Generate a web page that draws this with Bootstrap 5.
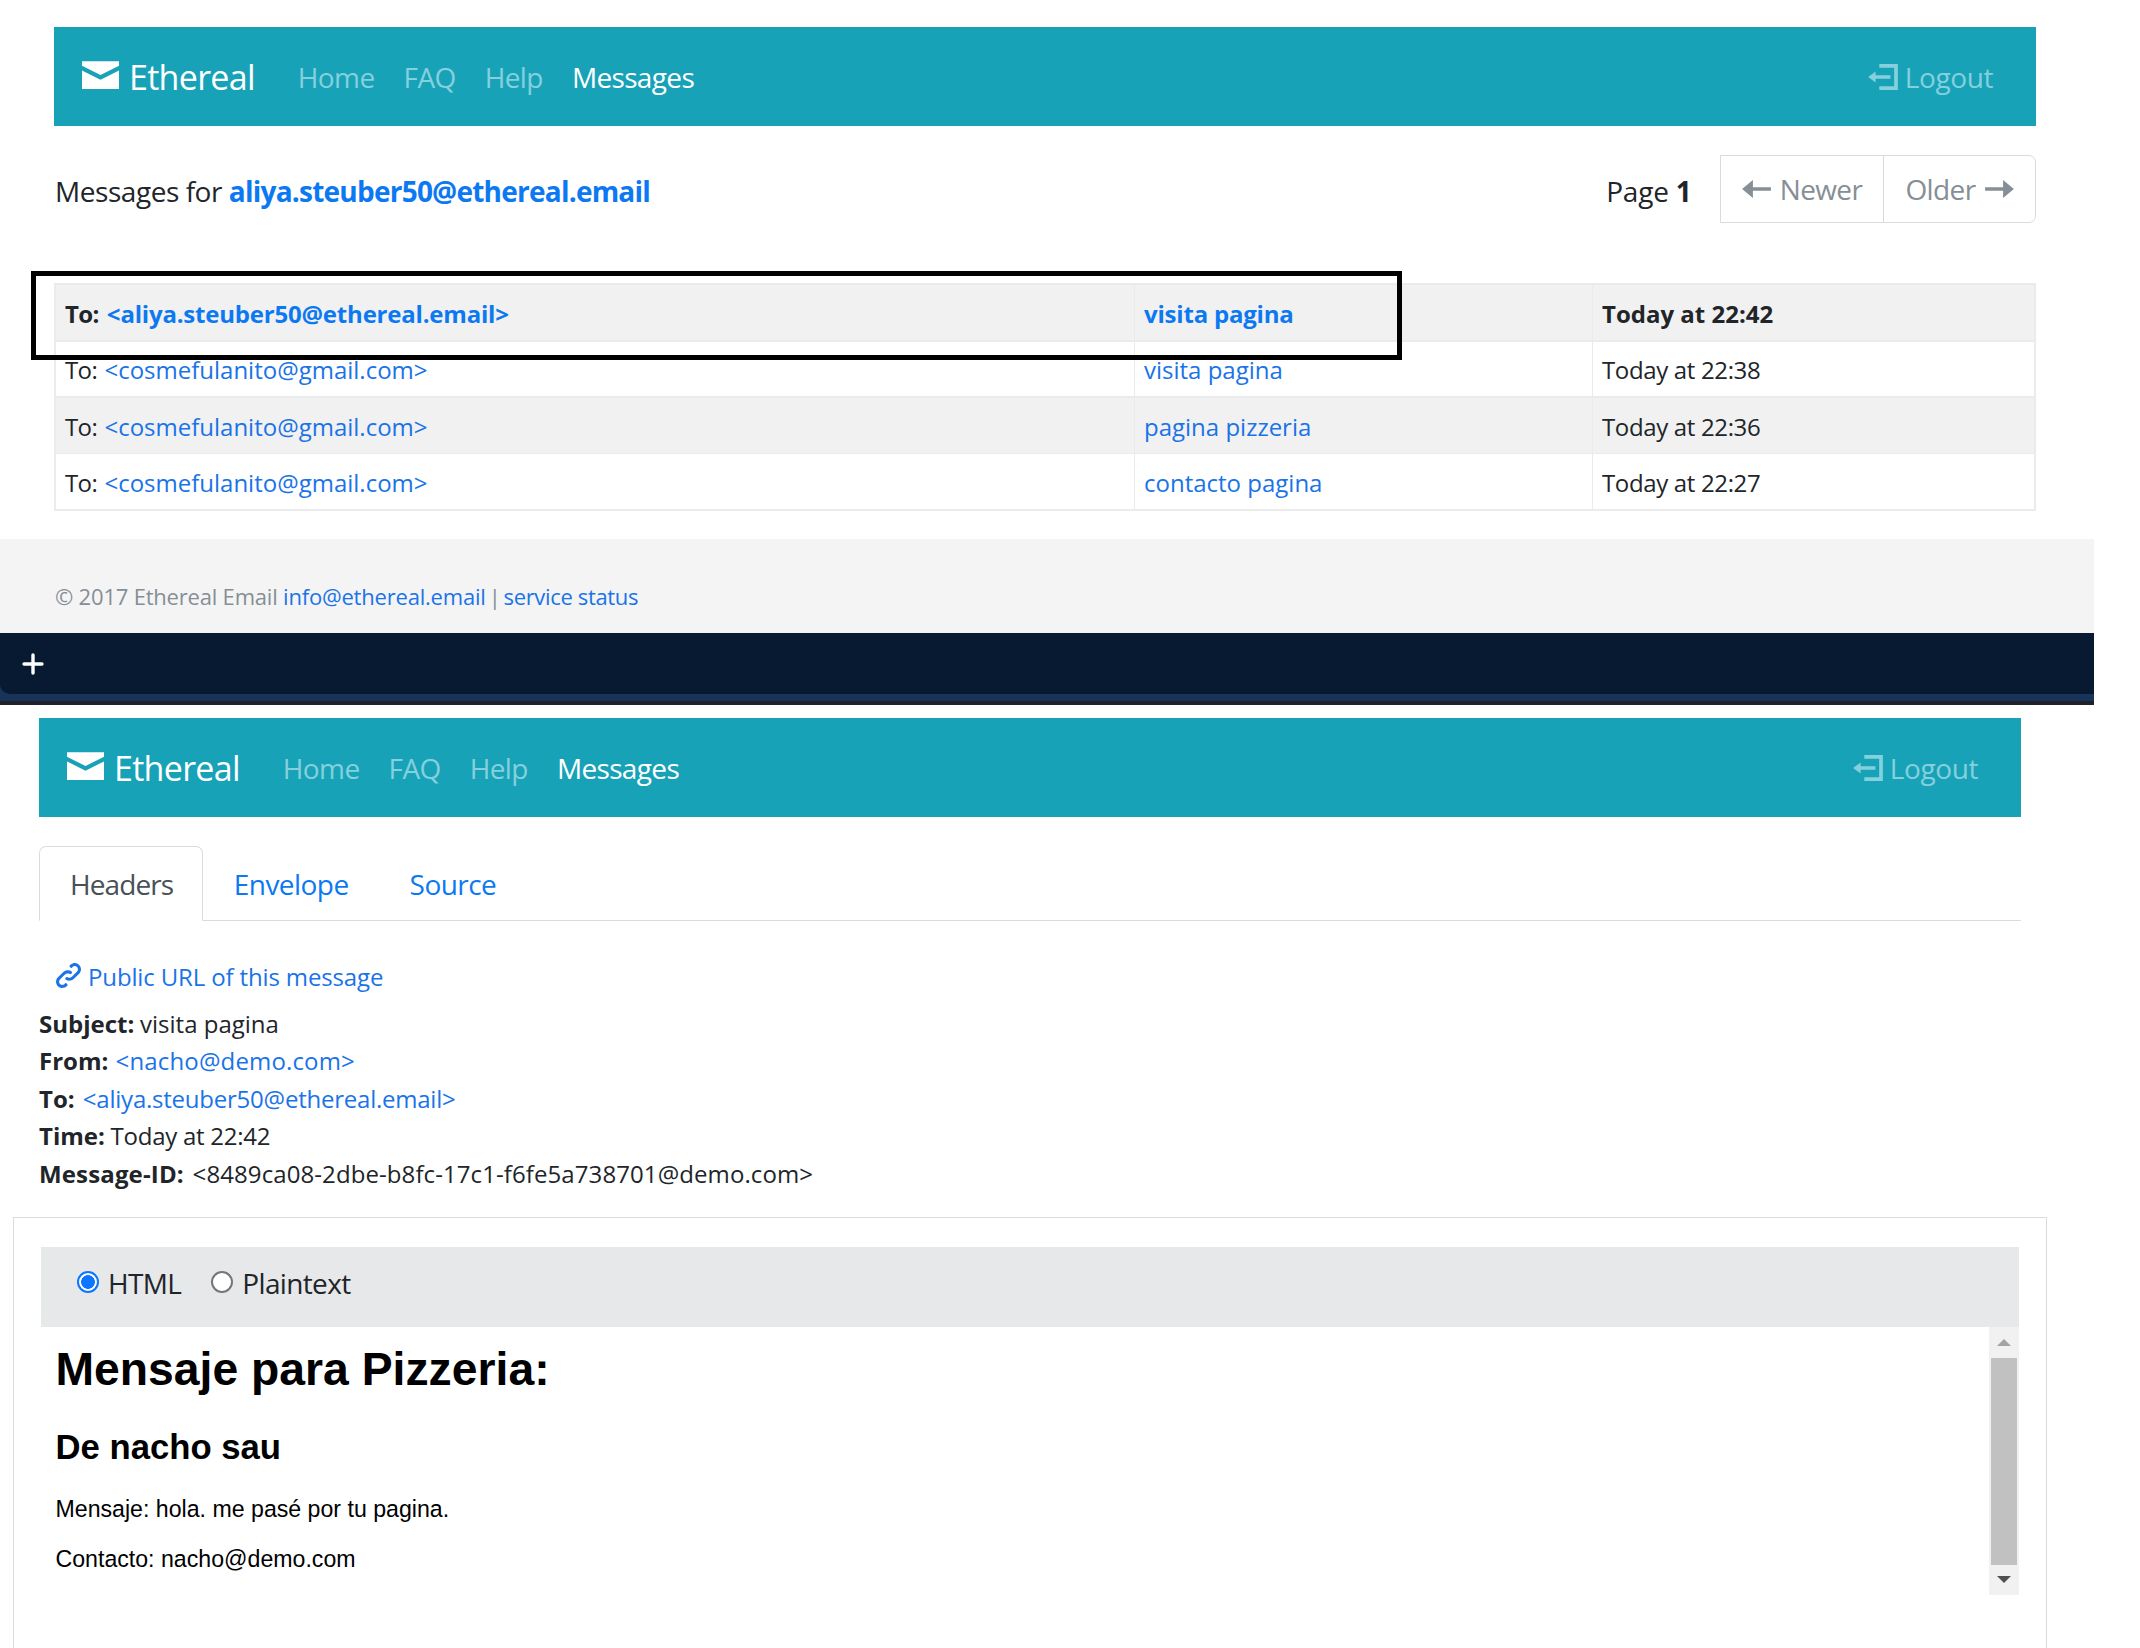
<!DOCTYPE html>
<html lang="en">
<head>
<meta charset="utf-8">
<title>Ethereal Email</title>
<link href="https://cdn.jsdelivr.net/npm/bootstrap@5.3.0/dist/css/bootstrap.min.css" rel="stylesheet">
<style>
  body { font-family: "Open Sans", "Noto Sans", sans-serif; font-size: 28px; color: #212529; background: #fff; height: 1648px; overflow: hidden; }
  a { color: #1a73e8; text-decoration: none; }
  strong a, .mail-table .fw-bold a { color: #0c79f2; }
  strong { font-weight: 700; }
  svg { fill: currentColor; flex: none; display: block; }
  .screen { width: 2094px; }

  .top-nav { height: 99px; background: #18a2b8; padding: 0 43px 0 28px; line-height: 42px; letter-spacing: -.6px; }
  .top-nav a { color: #84d0dc; }
  .top-nav .brand-link { color: #fff; font-size: 34px; letter-spacing: -.7px; gap: 10px; margin-right: 43px; }
  .top-nav .brand-link svg { margin-bottom: 3px; }
  .top-nav .brand-link span { padding-top: 1px; }
  .top-nav .nav-list { gap: 29px; }
  .top-nav .current { color: #fff; letter-spacing: -.65px; }
  .top-nav .logout-link { gap: 7px; letter-spacing: -.4px; }
  .inbox { padding: 27px 58px 0 54px; height: 539px; }
  .list-head { margin-top: 29px; height: 68px; line-height: 42px; }
  .list-head > div { padding: 3px 0 0 1px; letter-spacing: -.45px; }
  .list-head strong { letter-spacing: -.77px; }
  .list-head .page-no { margin-right: 29px; letter-spacing: -.2px; }
  .pager { width: 316px; border: 1px solid #d9dcdf; border-radius: 0 7px 7px 0; color: #868e96; letter-spacing: -.6px; }
  .pager > span { gap: 9px; }
  .pager > span:first-child { width: 163px; border-right: 1px solid #d9dcdf; }

  .mail-table { margin: 60px 0 0; width: 1982px; table-layout: fixed; border-collapse: separate; border-spacing: 0; font-size: 24px; line-height: 36px; color: #212529; }
  .mail-table td { box-sizing: border-box; padding: 2px 0 0 9px; vertical-align: middle; border: 0 solid #e9ebed; border-width: 2px 0 0 1px; background: #fff; box-shadow: none; height: 57px; }
  .mail-table tr:nth-child(odd) td { background: #f1f1f1; }
  .mail-table tr:nth-child(2) td { height: 56px; padding-top: 1px; }
  .mail-table tr:last-child td { height: 58px; border-top-width: 1px; border-bottom-width: 2px; padding-top: 3px; }
  .mail-table td:first-child { border-left-width: 2px; }
  .mail-table td:first-child span { letter-spacing: -.6px; margin-right: 1px; }
  .mail-table .fw-bold td:first-child span { margin-right: 2px; }
  .mail-table td:last-child { border-right-width: 2px; letter-spacing: -.35px; }
  .mail-table .fw-bold td { letter-spacing: -.2px; }
  .mail-table .fw-bold td:last-child { letter-spacing: 0; }
  .marker { position: absolute; left: 31px; top: 271px; width: 1371px; height: 89px; border: 5px solid #000; }

  .site-foot { height: 94px; background: #f4f4f4; color: #868e96; font-size: 22px; letter-spacing: -.2px; padding: 17px 0 0 55px; line-height: 80px; }
  .site-foot i { margin: 0 -2.5px; font-style: normal; }
  .site-foot .status-link { letter-spacing: -.35px; }
  .tab-strip { height: 68px; background: #19335a; }
  .tab-strip div { height: 61px; background: #081a31; border-bottom-left-radius: 10px; padding: 20px 0 0 22px; color: #fff; }
  .dark-line { height: 4px; background: #1f2229; }

  .message { padding: 13px 73px 0 39px; }
  .msg-tabs { margin-top: 29px; height: 75px; border-bottom: 1px solid #d9dcdf; line-height: 42px; letter-spacing: -.55px; flex-wrap: nowrap; }
  .msg-tabs .nav-link { height: 75px; padding: 16px 29.5px 0; border-radius: 7px 7px 0 0; color: #0c79f2; margin-bottom: -1px; }
  .msg-tabs .nav-link.active { color: #495057; border-color: #d9dcdf #d9dcdf #fff; letter-spacing: -.9px; padding-left: 30px; padding-right: 29px; }
  .public-link { font-size: 24px; line-height: 36px; margin: 38px 0 0 17px; gap: 7px; letter-spacing: -.14px; }
  .public-link svg { margin-bottom: 4px; }
  .head-list { font-size: 24px; line-height: 37.5px; margin-top: 9.5px; }
  .head-list .val { margin-left: -.5px; }
  .head-list .from-val { margin-left: 1px; letter-spacing: .15px; }
  .head-list .to-val { margin-left: 2px; letter-spacing: -.23px; }
  .head-list .time-val { letter-spacing: -.25px; }
  .head-list .id-key { letter-spacing: .15px; }
  .head-list .id-val { margin-left: 2.5px; letter-spacing: .09px; }

  .msg-card { width: 2034px; height: 440px; margin: 25px 0 0 13px; border: 1px solid #d9dcdf; border-bottom: 0; padding: 29px 27px 0; }
  .view-bar { height: 80px; background: #e6e8ea; line-height: 42px; letter-spacing: -.65px; padding: 15px 0 0 36px; }
  .view-bar label { gap: 9px; }
  .view-bar label + label { margin-left: 6px; }
  .view-bar input { appearance: none; width: 22px; height: 22px; margin: 0 0 2px; border: 2px solid #767676; border-radius: 50%; background: #fff; }
  .view-bar input:checked { border-color: #0d75ff; background: radial-gradient(circle, #0d75ff 6.5px, #fff 7.2px); }
  .mail-frame { height: 268px; font-family: "Liberation Sans", Arial, sans-serif; color: #000; font-size: 23.15px; }
  .mail-frame .frame-text { padding: 12px 0 0 14.5px; }
  .mail-frame h1 { font-size: 46.3px; line-height: 60px; font-weight: 700; margin: 0; }
  .mail-frame h2 { font-size: 34.7px; line-height: 44px; font-weight: 700; margin: 26px 0 0; }
  .mail-frame p { line-height: 30px; margin: 25px 0 0; }
  .mail-frame p + p { margin-top: 20px; }
  .scroll-rail { width: 30px; background: #f1f1f1; padding: 12px 2px; }
  .scroll-rail div { height: 207px; background: #c1c1c1; align-self: stretch; }
  .scroll-rail svg { color: #a3a3a3; }
  .scroll-rail div + svg { color: #505050; }
</style>
</head>
<body>
<svg class="d-none">
  <symbol id="i-mail" viewBox="0 1 8 6"><path d="M0 1v1l4 2 4-2v-1h-8zm0 2v4h8v-4l-4 2-4-2z"/></symbol>
  <symbol id="i-logout" viewBox="0 0 8 7"><path d="M3 0v1h4v5h-4v1h5v-7h-5zm-1 2l-2 1.5 2 1.5v-1h4v-1h-4v-1z"/></symbol>
  <symbol id="i-left" viewBox="0 1 8 5"><path d="M3 1l-3 2.5 3 2.5v-2h5v-1h-5v-2z"/></symbol>
  <symbol id="i-right" viewBox="0 1 8 5"><path d="M5 1v2h-5v1h5v2l3-2.5-3-2.5z"/></symbol>
  <symbol id="i-link" viewBox="0 0 8 8"><path d="M5.88.03c-.18.01-.36.03-.53.09-.27.1-.53.25-.75.47a.5.5 0 1 0 .69.69c.11-.11.24-.17.38-.22.35-.12.78-.07 1.06.22.39.39.39 1.04 0 1.44l-1.5 1.5c-.44.44-.8.48-1.06.47-.26-.01-.41-.13-.41-.13a.5.5 0 1 0-.5.88s.34.22.84.25c.5.03 1.2-.16 1.81-.78l1.5-1.5c.78-.78.78-2.04 0-2.81-.28-.28-.61-.45-.97-.53-.18-.04-.38-.04-.56-.03zm-2 2.31c-.5-.02-1.19.15-1.78.75l-1.5 1.5c-.78.78-.78 2.04 0 2.81.56.56 1.36.72 2.06.47.27-.1.53-.25.75-.47a.5.5 0 1 0-.69-.69c-.11.11-.24.17-.38.22-.35.12-.78.07-1.06-.22-.39-.39-.39-1.04 0-1.44l1.5-1.5c.4-.4.75-.45 1.03-.44.28.01.47.09.47.09a.5.5 0 1 0 .44-.88s-.34-.2-.84-.22z"/></symbol>
</svg>
<div class="screen position-relative">
  <section class="inbox">
    <nav class="top-nav d-flex align-items-center">
      <a href="#" class="brand-link d-flex align-items-center"><svg width="37" height="28"><use href="#i-mail"/></svg><span>Ethereal</span></a>
      <div class="nav-list d-flex"><a href="#">Home</a><a href="#">FAQ</a><a href="#">Help</a><a href="#" class="current">Messages</a></div>
      <a href="#" class="logout-link d-flex align-items-center ms-auto"><svg width="30" height="26"><use href="#i-logout"/></svg><span>Logout</span></a>
    </nav>
    <div class="list-head d-flex align-items-center">
      <div>Messages for <strong><a href="#">aliya.steuber50@ethereal.email</a></strong></div>
      <div class="page-no ms-auto">Page <strong>1</strong></div>
      <nav class="pager d-flex align-self-stretch p-0">
        <span class="d-flex align-items-center justify-content-center"><svg width="29" height="18"><use href="#i-left"/></svg><span>Newer</span></span>
        <span class="d-flex align-items-center justify-content-center flex-grow-1"><span>Older</span><svg width="29" height="18"><use href="#i-right"/></svg></span>
      </nav>
    </div>
    <table class="table mail-table">
      <colgroup><col style="width:1080px"><col style="width:458px"><col></colgroup>
      <tbody>
        <tr class="fw-bold"><td><span>To:</span> <a href="#">&lt;aliya.steuber50@ethereal.email&gt;</a></td><td><a href="#">visita pagina</a></td><td>Today at 22:42</td></tr>
        <tr><td><span>To:</span> <a href="#">&lt;cosmefulanito@gmail.com&gt;</a></td><td><a href="#">visita pagina</a></td><td>Today at 22:38</td></tr>
        <tr><td><span>To:</span> <a href="#">&lt;cosmefulanito@gmail.com&gt;</a></td><td><a href="#">pagina pizzeria</a></td><td>Today at 22:36</td></tr>
        <tr><td><span>To:</span> <a href="#">&lt;cosmefulanito@gmail.com&gt;</a></td><td><a href="#">contacto pagina</a></td><td>Today at 22:27</td></tr>
      </tbody>
    </table>
    <div class="marker"></div>
  </section>
  <footer class="site-foot">© 2017 Ethereal Email <a href="#">info@ethereal.email</a> <i>|</i> <a href="#" class="status-link">service status</a></footer>
  <div class="tab-strip"><div><svg width="22" height="22" viewBox="0 0 22 22"><path d="M11 2v18M2 11h18" stroke="#fff" stroke-width="3.4" stroke-linecap="round"/></svg></div></div>
  <div class="dark-line"></div>

  <section class="message">
    <nav class="top-nav d-flex align-items-center">
      <a href="#" class="brand-link d-flex align-items-center"><svg width="37" height="28"><use href="#i-mail"/></svg><span>Ethereal</span></a>
      <div class="nav-list d-flex"><a href="#">Home</a><a href="#">FAQ</a><a href="#">Help</a><a href="#" class="current">Messages</a></div>
      <a href="#" class="logout-link d-flex align-items-center ms-auto"><svg width="30" height="26"><use href="#i-logout"/></svg><span>Logout</span></a>
    </nav>
    <div class="nav nav-tabs msg-tabs">
      <a class="nav-link active" href="#">Headers</a><a class="nav-link" href="#">Envelope</a><a class="nav-link" href="#">Source</a>
    </div>
    <a href="#" class="public-link d-flex align-items-center"><svg width="25" height="25"><use href="#i-link"/></svg><span>Public URL of this message</span></a>
    <div class="head-list">
      <div><strong>Subject:</strong> <span class="val">visita pagina</span></div>
      <div><strong>From:</strong> <a href="#" class="from-val">&lt;nacho@demo.com&gt;</a></div>
      <div><strong>To:</strong> <a href="#" class="to-val">&lt;aliya.steuber50@ethereal.email&gt;</a></div>
      <div><strong>Time:</strong> <span class="val time-val">Today at 22:42</span></div>
      <div><strong class="id-key">Message-ID:</strong> <span class="id-val">&lt;8489ca08-2dbe-b8fc-17c1-f6fe5a738701@demo.com&gt;</span></div>
    </div>
  </section>
  <section class="msg-card">
    <div class="view-bar d-flex align-items-start">
      <label class="d-flex align-items-center me-4"><input type="radio" name="view" checked><span>HTML</span></label>
      <label class="d-flex align-items-center"><input type="radio" name="view"><span>Plaintext</span></label>
    </div>
    <div class="mail-frame d-flex">
      <div class="frame-text flex-grow-1">
        <h1>Mensaje para Pizzeria:</h1>
        <h2>De nacho sau</h2>
        <p>Mensaje: hola. me pasé por tu pagina.</p>
        <p>Contacto: nacho@demo.com</p>
      </div>
      <div class="scroll-rail d-flex flex-column align-items-center justify-content-between">
        <svg width="14" height="7" viewBox="0 0 14 7"><path d="M0 7L7 0l7 7z"/></svg>
        <div></div>
        <svg width="14" height="7" viewBox="0 0 14 7"><path d="M0 0l7 7 7-7z"/></svg>
      </div>
    </div>
  </section>
</div>
<script src="https://cdn.jsdelivr.net/npm/bootstrap@5.3.0/dist/js/bootstrap.bundle.min.js"></script>
</body>
</html>
